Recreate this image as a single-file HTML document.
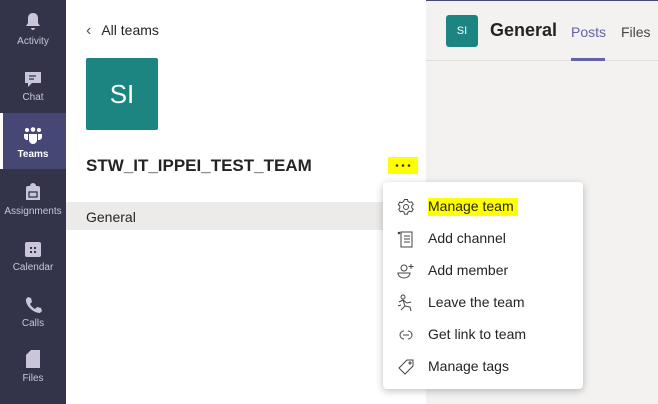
<!DOCTYPE html>
<html><head><style>
*{margin:0;padding:0;box-sizing:border-box}
body{width:658px;height:404px;overflow:hidden;position:relative;font-family:"Liberation Sans",sans-serif;background:#f3f2f1}
.rail{position:absolute;left:0;top:0;width:66px;height:404px;background:#33344a}
.ri{position:absolute;left:0;width:66px;text-align:center;color:#c8c6d8;font-size:10px}
.ri svg{display:block;margin:0 auto 4px}
.act{background:#464775;color:#fff}
.act:before{content:"";position:absolute;left:0;top:0;width:3px;height:100%;background:#fff}
.panel{position:absolute;left:66px;top:0;width:360px;height:404px;background:#fff}
.menu{position:absolute;left:383px;top:182px;width:200px;height:207px;background:#fff;border-radius:4px;box-shadow:0 2px 8px rgba(0,0,0,.25)}
.mi{position:absolute;left:45px;font-size:14px;color:#252423}
.ic{position:absolute;left:14px;width:18px;height:18px}
</style></head><body>
<div style="position:absolute;left:0;top:0;width:658px;height:1px;background:#464775"></div>
<div class="rail">
 <div class="ri" style="top:12px;height:44px"><svg width="18" height="20" viewBox="0 0 18 20"><path d="M9 1c-3 0-5 2-5 5v5l-2 3h14l-2-3V6c0-3-2-5-5-5z M7 16h4c0 1-1 2-2 2s-2-1-2-2z" fill="#c8c6d8"/></svg>Activity</div>
 <div class="ri" style="top:70px;height:44px"><svg width="18" height="18" viewBox="0 0 18 18"><path d="M1 2h16v11H8l-4 4v-4H1z" fill="#c8c6d8"/><path d="M5 6h7M5 9h5" stroke="#33344a" stroke-width="1.3"/></svg>Chat</div>
 <div class="ri act" style="top:113px;height:56px;padding-top:14px"><svg width="22" height="18" viewBox="0 0 22 18"><circle cx="5" cy="3" r="2" fill="#fff"/><circle cx="11" cy="2.5" r="2.3" fill="#fff"/><circle cx="17" cy="3" r="2" fill="#fff"/><path d="M2 7h4v6l-2 0-2-2z M7 7h8v6a4 4 0 0 1-8 0z M16 7h4v4l-2 2h-2z" fill="#fff"/></svg><b>Teams</b></div>
 <div class="ri" style="top:182px;height:44px"><svg width="16" height="20" viewBox="0 0 16 20"><path d="M5 4a3 3 0 0 1 6 0h2a2 2 0 0 1 2 2v12H1V6a2 2 0 0 1 2-2z" fill="#c8c6d8"/><rect x="4" y="10" width="8" height="5" fill="none" stroke="#33344a" stroke-width="1.3"/></svg>Assignments</div>
 <div class="ri" style="top:240px;height:44px"><svg width="18" height="18" viewBox="0 0 18 18"><rect x="1" y="2" width="16" height="15" rx="2" fill="#c8c6d8"/><path d="M6 7h2v2H6zM10 7h2v2h-2zM6 11h2v2H6zM10 11h2v2h-2z" fill="#33344a"/></svg>Calendar</div>
 <div class="ri" style="top:296px;height:44px"><svg width="18" height="18" viewBox="0 0 18 18"><path d="M4 1l3 1 1 4-2 2c1 2 3 4 5 5l2-2 4 1 1 3-2 2C9 17 1 9 2 3z" fill="#c8c6d8"/></svg>Calls</div>
 <div class="ri" style="top:349px;height:44px"><svg width="16" height="20" viewBox="0 0 16 20"><path d="M6 1h9v18H1V6z" fill="#c8c6d8"/></svg>Files</div>
</div>
<div class="panel">
 <div style="position:absolute;left:20px;top:22px;font-size:14px;color:#252423"><span style="font-size:16px;color:#555;margin-right:10px">&#8249;</span>All teams</div>
 <div style="position:absolute;left:20px;top:58px;width:72px;height:72px;background:#1c8582;border-radius:2px;color:#fff;font-size:26px;line-height:72px;text-align:center">SI</div>
 <div style="position:absolute;left:20px;top:156px;font-size:17px;font-weight:bold;color:#252423">STW_IT_IPPEI_TEST_TEAM</div>
 <div style="position:absolute;left:322px;top:157px;width:30px;height:17px;background:#ffff00"><svg width="30" height="17"><circle cx="9" cy="8.5" r="1.3" fill="#333"/><circle cx="15" cy="8.5" r="1.3" fill="#333"/><circle cx="21" cy="8.5" r="1.3" fill="#333"/></svg></div>
 <div style="position:absolute;left:0;top:202px;width:360px;height:28px;background:#edebe9;font-size:14px;padding:7px 20px;color:#252423">General</div>
</div>
<div style="position:absolute;left:426px;top:0;width:232px;height:61px;border-bottom:1px solid #e1dfdd">
 <div style="position:absolute;left:20px;top:15px;width:32px;height:32px;background:#1c8582;border-radius:3px;color:#fff;font-size:11px;line-height:32px;text-align:center">SI</div>
 <div style="position:absolute;left:64px;top:20px;font-size:18px;font-weight:bold;color:#252423">General</div>
 <div style="position:absolute;left:145px;top:24px;font-size:14px;color:#6264a7">Posts</div>
 <div style="position:absolute;left:145px;top:58px;width:34px;height:3px;background:#6264a7"></div>
 <div style="position:absolute;left:195px;top:24px;font-size:14px;color:#484644">Files</div>
</div>
<div class="menu">
 <svg class="ic" style="top:16px" viewBox="0 0 18 18" fill="none" stroke="#444" stroke-width="1"><circle cx="9" cy="9" r="2.5"/><path d="M7.5 1.5h3l.5 2 1.7 1 2-.7 1.5 2.6-1.5 1.4v2l1.5 1.4-1.5 2.6-2-.7-1.7 1-.5 2h-3l-.5-2-1.7-1-2 .7-1.5-2.6L2.8 10V8L1.3 6.6l1.5-2.6 2 .7 1.7-1z"/></svg>
 <div class="mi" style="top:16px;background:#ffff00;padding:0 4px 2px 0">Manage team</div>
 <svg class="ic" style="top:48px" viewBox="0 0 18 18" fill="none" stroke="#444" stroke-width="1"><path d="M4 2h11v15H4zM7 6h6M7 9h6M7 12h6"/><circle cx="2" cy="3" r=".8" fill="#444"/></svg>
 <div class="mi" style="top:48px">Add channel</div>
 <svg class="ic" style="top:80px" viewBox="0 0 18 18" fill="none" stroke="#444" stroke-width="1"><circle cx="7" cy="6" r="3"/><path d="M1 11h12c0 3-3 5-6 5s-6-2-6-5zM14 2v5M11.5 4.5h5"/></svg>
 <div class="mi" style="top:80px">Add member</div>
 <svg class="ic" style="top:112px" viewBox="0 0 18 18" fill="none" stroke="#444" stroke-width="1"><circle cx="6" cy="3" r="2"/><path d="M2 8l4-2 4 3 4-1M6 6l2 6-4 4M8 12l5 1 1 4M1 12l3-1"/></svg>
 <div class="mi" style="top:112px">Leave the team</div>
 <svg class="ic" style="top:144px" viewBox="0 0 18 18" fill="none" stroke="#444" stroke-width="1"><path d="M7 5a4 4 0 1 0 0 8M11 5a4 4 0 1 1 0 8M6 9h6"/></svg>
 <div class="mi" style="top:144px">Get link to team</div>
 <svg class="ic" style="top:176px" viewBox="0 0 18 18" fill="none" stroke="#444" stroke-width="1"><path d="M10 2h6v6l-8 8-6-6z"/><circle cx="13" cy="5" r="1"/></svg>
 <div class="mi" style="top:176px">Manage tags</div>
</div>
</body></html>
